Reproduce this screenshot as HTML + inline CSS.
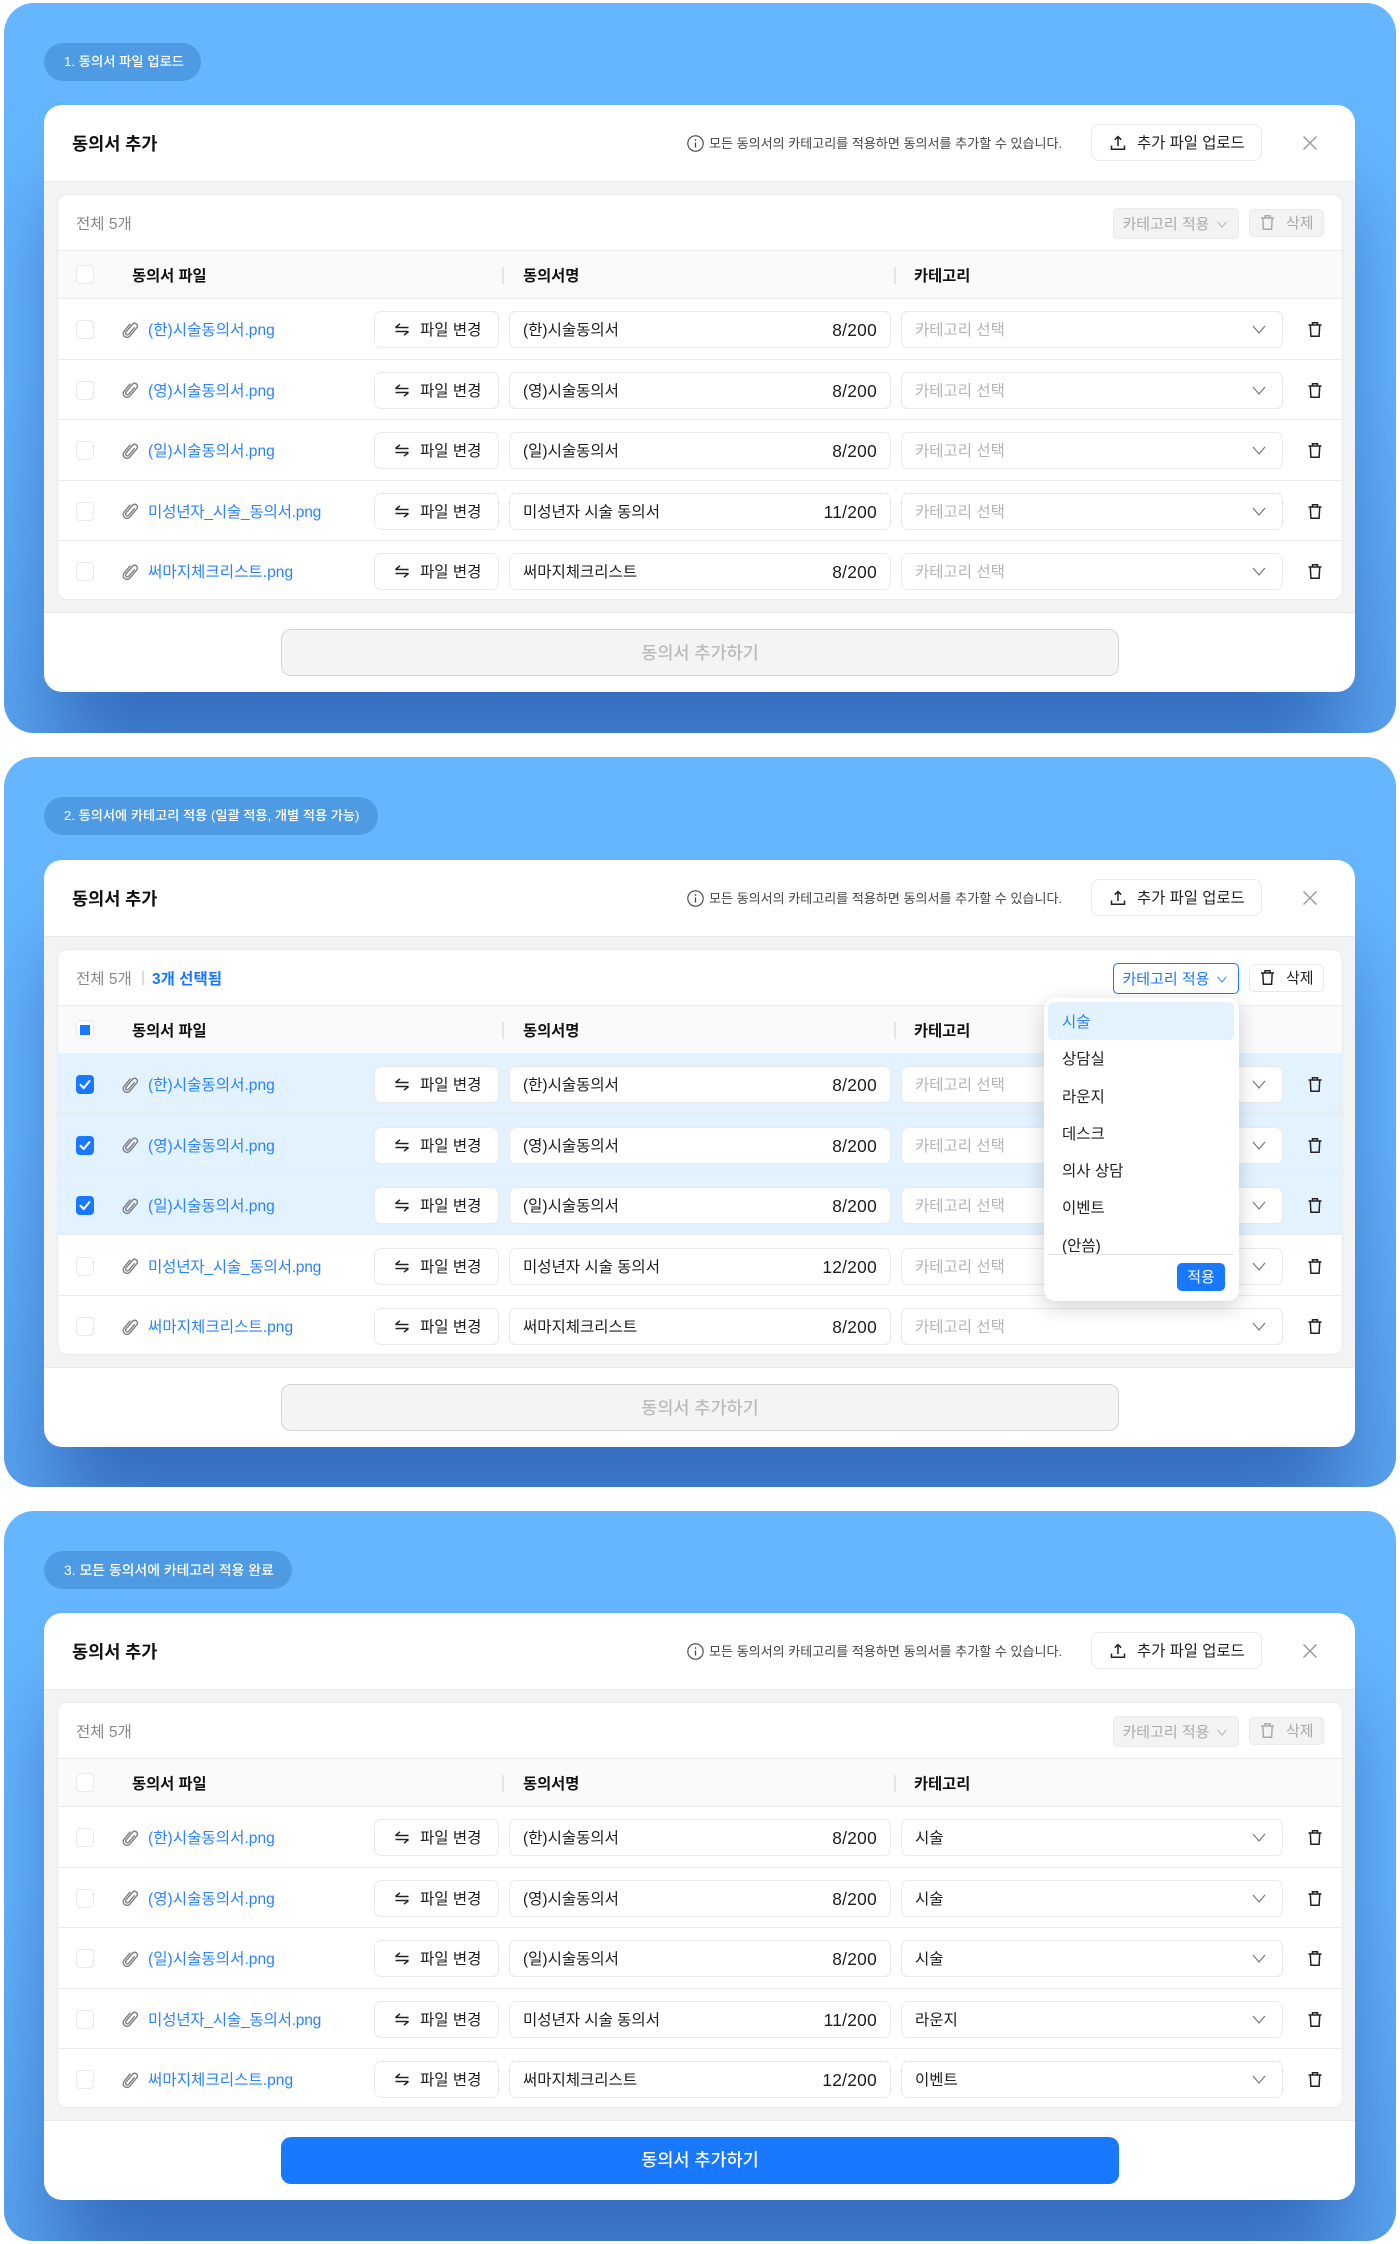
<!DOCTYPE html>
<html lang="ko"><head><meta charset="utf-8"><title>동의서 추가</title>
<style>
*{box-sizing:border-box;margin:0;padding:0}
html,body{width:1400px;height:2244px;background:#fff;overflow:hidden}
body{position:relative;font-family:"Liberation Sans","Noto Sans CJK KR",sans-serif;color:#1c1c1e;font-size:15.5px}
.p{position:absolute;left:4px;width:1392px;height:730px;border-radius:30px;background:linear-gradient(180deg,#66b6ff 0,#66b6ff 50%,#5aa5f0 100%);overflow:hidden}
.w{position:absolute;left:-4px;top:-3px;width:1400px;height:733px}
.w>*,.a{position:absolute}
.pill{left:44px;top:43px;height:38px;line-height:38px;border-radius:19px;background:#4f9be3;color:#fff;font-size:13.3px;font-weight:500;padding-left:20px;white-space:nowrap}
.m{left:44px;top:105px;width:1311px;height:587px;background:#fff;border-radius:18px;box-shadow:0 80px 90px -10px rgba(14,50,140,.5)}
.gray{left:44px;top:181px;width:1311px;height:432px;background:#f3f3f3;border-top:1.5px solid #e8e8e8;border-bottom:1.5px solid #e8e8e8}
.title{left:72px;top:128px;line-height:33px;font-size:17.5px;font-weight:700;color:#111}
.info{left:709px;top:128px;line-height:32px;font-size:13.05px;color:#444;white-space:nowrap}
.ii{left:687px;top:134.500px;width:17px;height:17px;color:#444}
.up{left:1091px;top:124px;width:171px;height:37px;border:1.5px solid #e9e9e9;border-radius:8px;background:#fff;line-height:38px;font-size:15.4px;padding-left:45px;white-space:nowrap}
.upi{left:1110px;top:134.500px;width:16px;height:16px;color:#222}
.x{left:1302px;top:135px;width:16px;height:16px;color:#9a9aa4}
.card{left:57px;top:194px;width:1286px;height:406px;background:#fff;border:1.5px solid #e9e9e9;border-radius:10px}
.th{left:58px;top:250px;width:1284px;height:48.5px;background:#fafafa;border-top:1.5px solid #ececec;border-bottom:1.5px solid #ececec}
.tot{left:76px;top:209px;line-height:31px;font-size:15.5px;color:#888}
.sep{width:2px;height:17px;top:267px;background:#e4e4e4}
.hd{top:260px;line-height:33px;font-size:15.3px;font-weight:700;color:#111}
.cat{left:1113px;top:208px;width:126px;height:31px;line-height:31px;border:1.5px solid #e9e9e9;background:#f3f3f3;border-radius:5px;color:#aaa;font-size:15px;padding-left:8.5px;white-space:nowrap}
.cat svg{position:absolute;left:102px;top:9px;width:12px;height:12px}
.del{left:1249px;top:209px;width:75px;height:28px;line-height:28px;border:1.5px solid #e9e9e9;background:#f3f3f3;border-radius:5px;color:#aaa;font-size:15px;padding-left:36px}
.del svg{position:absolute;left:9px;top:4px;width:17px;height:17px}
.cat.on{border-color:#1878ff;background:#fff;color:#1878ff}
.del.on{background:#fff;color:#222}
.cb{left:76px;width:18px;height:19px;border:1.5px solid #e9e9e9;border-radius:4px;background:#fff}
.r{position:absolute;left:0;width:1400px;height:60.5px}
.r:before{content:"";position:absolute;left:58px;width:1284px;top:0;height:60.5px;border-bottom:1.5px solid #ececec}
.r.n:before{border-bottom:0;height:59px}
.r.s:before{background:#e3f2ff;border-bottom:0;height:59px}
.r.s:after{content:"";position:absolute;left:58px;width:1284px;top:59px;height:1.5px;background:#e6ecf2}
.r>*{position:absolute}
.r .cb{top:22px}
.r .ck{left:76px;top:22px;width:18px;height:19px;border-radius:4px;background:#1878ff;color:#fff}
.r .clip{left:118px;top:19.700px;width:24px;height:24px;color:#7d7d82}
.l{left:148px;top:13px;line-height:40px;color:#2b82ff;white-space:nowrap;font-size:15.6px}
.l.u{letter-spacing:-.25px}
.b{left:374px;top:13px;width:125px;height:37px;line-height:37px;border:1.5px solid #e9e9e9;border-radius:7px;background:#fff;padding-left:45px;white-space:nowrap}
.sw{left:394px;top:23px;width:16px;height:16px;color:#222}
.in{left:509px;top:13px;width:382px;height:37px;line-height:37px;border:1.5px solid #e9e9e9;border-radius:7px;background:#fff;padding-left:13px;white-space:nowrap}
.in b{position:absolute;right:13px;top:0;font-weight:400;font-size:17.3px;letter-spacing:.3px}
.se{left:901px;top:13px;width:382px;height:37px;line-height:37px;border:1.5px solid #e9e9e9;border-radius:7px;background:#fff;padding-left:13px;white-space:nowrap}
.se.ph{color:#b4b4b8}
.se svg{position:absolute;left:349px;top:9px;width:16px;height:16px;color:#777}
.t{left:1307px;top:23px;width:16px;height:17px;color:#222}
.go{left:281px;top:629px;width:838px;height:47px;line-height:47px;text-align:center;border-radius:10px;font-size:17.5px;font-weight:500}
.go.d{background:#f4f4f4;border:1.5px solid #d4d4d4;color:#bbb}
.go.e{background:#1878ff;color:#fff}
svg{display:block;fill:none;stroke:currentColor}
.dd{left:1044px;top:243px;width:195px;height:303px;background:#fff;border-radius:11px;box-shadow:0 6px 22px rgba(0,0,0,.18);z-index:5}
.dd .hl{left:4px;top:4px;width:186px;height:38px;background:#e3f2ff;border-radius:5px}
.dd .list{left:0;top:0;width:195px;height:256px;overflow:hidden}
.dd .it{position:absolute;left:18px;line-height:33px;white-space:nowrap;font-size:15.5px;color:#222}
.dd .ln{left:4px;top:255.5px;width:186px;height:1.5px;background:#e5e5e5}
.dd .ap{left:133px;top:265px;width:48px;height:28px;line-height:29px;background:#1878ff;color:#fff;border-radius:5px;text-align:center;font-size:15px}
</style></head><body>
<svg width="0" height="0" style="position:absolute">
<symbol id="c" viewBox="0 0 24 24"><g transform="rotate(40 12 12)" stroke-width="1.4" stroke-linecap="round"><path d="M8.200 7.500V16.700a3.800 3.800 0 0 0 7.600 0V6a2.800 2.800 0 0 0-5.600 0V16a1.800 1.800 0 0 0 3.600 0V7.500"/></g></symbol>
<symbol id="s" viewBox="0 0 16 16"><path stroke-width="1.5" d="M1.500 6.500h13M1.500 6.500L6 2.800M14.500 10.500h-13M14.500 10.500L10 14.200"/></symbol>
<symbol id="d" viewBox="0 0 16 16"><path stroke-width="1.200" d="M2 5l6 7 6-7"/></symbol>
<symbol id="t" viewBox="0 0 16 17"><path stroke-width="1.500" d="M1.500 4h13M5.500 4V1.700h5V4M3.300 4l.6 11.300h8.200l.6-11.300"/></symbol>
<symbol id="x" viewBox="0 0 16 16"><path stroke-width="1.500" d="M1.500 1.500l13 13M14.500 1.500l-13 13"/></symbol>
<symbol id="u" viewBox="0 0 16 16"><path stroke-width="1.500" d="M1.500 10.500v3.700h13v-3.700M8 11V1.500M4.800 4.700L8 1.500l3.200 3.200"/></symbol>
<symbol id="i" viewBox="0 0 17 17"><circle cx="8.500" cy="8.500" r="7.700" stroke-width="1.100"/><path stroke-width="1.300" d="M8.500 7.500v5M8.500 4.300v1.400"/></symbol>
<symbol id="k" viewBox="0 0 18 19"><path stroke-width="2" stroke-linecap="round" stroke-linejoin="round" d="M4.500 9.800l3.200 3.200 5.800-7"/></symbol>
</svg>

<!-- PANEL 1 -->
<div class="p" style="top:3px"><div class="w">
<div class="pill" style="width:157px">1. 동의서 파일 업로드</div>
<div class="m"></div><div class="gray"></div>
<div class="title">동의서 추가</div>
<svg class="ii"><use href="#i"/></svg><div class="info">모든 동의서의 카테고리를 적용하면 동의서를 추가할 수 있습니다.</div>
<div class="up">추가 파일 업로드</div><svg class="upi"><use href="#u"/></svg><svg class="x"><use href="#x"/></svg>
<div class="card"></div>
<div class="tot">전체 5개</div>
<div class="cat">카테고리 적용<svg><use href="#d"/></svg></div>
<div class="del"><svg><use href="#t"/></svg>삭제</div>
<div class="th"></div><i class="cb" style="top:265px"></i>
<div class="hd" style="left:132px">동의서 파일</div><div class="sep" style="left:502px"></div><div class="hd" style="left:523px">동의서명</div><div class="sep" style="left:894px"></div><div class="hd" style="left:914px">카테고리</div>

<div class="r" style="top:298px"><i class="cb"></i><svg class="clip"><use href="#c"/></svg><span class="l">(한)시술동의서.png</span><div class="b">파일 변경</div><svg class="sw"><use href="#s"/></svg><div class="in">(한)시술동의서<b>8/200</b></div><div class="se ph">카테고리 선택<svg><use href="#d"/></svg></div><svg class="t"><use href="#t"/></svg></div>
<div class="r" style="top:358.5px"><i class="cb"></i><svg class="clip"><use href="#c"/></svg><span class="l">(영)시술동의서.png</span><div class="b">파일 변경</div><svg class="sw"><use href="#s"/></svg><div class="in">(영)시술동의서<b>8/200</b></div><div class="se ph">카테고리 선택<svg><use href="#d"/></svg></div><svg class="t"><use href="#t"/></svg></div>
<div class="r" style="top:419px"><i class="cb"></i><svg class="clip"><use href="#c"/></svg><span class="l">(일)시술동의서.png</span><div class="b">파일 변경</div><svg class="sw"><use href="#s"/></svg><div class="in">(일)시술동의서<b>8/200</b></div><div class="se ph">카테고리 선택<svg><use href="#d"/></svg></div><svg class="t"><use href="#t"/></svg></div>
<div class="r" style="top:479.5px"><i class="cb"></i><svg class="clip"><use href="#c"/></svg><span class="l u">미성년자_시술_동의서.png</span><div class="b">파일 변경</div><svg class="sw"><use href="#s"/></svg><div class="in">미성년자 시술 동의서<b>11/200</b></div><div class="se ph">카테고리 선택<svg><use href="#d"/></svg></div><svg class="t"><use href="#t"/></svg></div>
<div class="r n" style="top:540px"><i class="cb"></i><svg class="clip"><use href="#c"/></svg><span class="l">써마지체크리스트.png</span><div class="b">파일 변경</div><svg class="sw"><use href="#s"/></svg><div class="in">써마지체크리스트<b>8/200</b></div><div class="se ph">카테고리 선택<svg><use href="#d"/></svg></div><svg class="t"><use href="#t"/></svg></div>
<div class="go d">동의서 추가하기</div>
</div></div>

<!-- PANEL 2 -->
<div class="p" style="top:757px"><div class="w" style="top:-2px">
<div class="pill" style="width:334px;top:42px;font-size:13.2px">2. 동의서에 카테고리 적용 (일괄 적용, 개별 적용 가능)</div>
<div class="m"></div><div class="gray"></div>
<div class="title">동의서 추가</div>
<svg class="ii"><use href="#i"/></svg><div class="info">모든 동의서의 카테고리를 적용하면 동의서를 추가할 수 있습니다.</div>
<div class="up">추가 파일 업로드</div><svg class="upi"><use href="#u"/></svg><svg class="x"><use href="#x"/></svg>
<div class="card"></div>
<div class="tot">전체 5개</div><div style="left:142px;top:216px;width:1.5px;height:14px;background:#ddd"></div><div class="tot" style="left:152px;color:#1878ff;font-weight:700">3개 선택됨</div>
<div class="cat on">카테고리 적용<svg><use href="#d"/></svg></div>
<div class="del on"><svg><use href="#t"/></svg>삭제</div>
<div class="th"></div><i class="cb" style="top:265px"></i><div style="left:80px;top:270px;width:10px;height:10px;background:#1878ff"></div>
<div class="hd" style="left:132px">동의서 파일</div><div class="sep" style="left:502px"></div><div class="hd" style="left:523px">동의서명</div><div class="sep" style="left:894px"></div><div class="hd" style="left:914px">카테고리</div>

<div class="r s" style="top:298px"><svg class="ck"><use href="#k"/></svg><svg class="clip"><use href="#c"/></svg><span class="l">(한)시술동의서.png</span><div class="b">파일 변경</div><svg class="sw"><use href="#s"/></svg><div class="in">(한)시술동의서<b>8/200</b></div><div class="se ph">카테고리 선택<svg><use href="#d"/></svg></div><svg class="t"><use href="#t"/></svg></div>
<div class="r s" style="top:358.5px"><svg class="ck"><use href="#k"/></svg><svg class="clip"><use href="#c"/></svg><span class="l">(영)시술동의서.png</span><div class="b">파일 변경</div><svg class="sw"><use href="#s"/></svg><div class="in">(영)시술동의서<b>8/200</b></div><div class="se ph">카테고리 선택<svg><use href="#d"/></svg></div><svg class="t"><use href="#t"/></svg></div>
<div class="r s" style="top:419px"><svg class="ck"><use href="#k"/></svg><svg class="clip"><use href="#c"/></svg><span class="l">(일)시술동의서.png</span><div class="b">파일 변경</div><svg class="sw"><use href="#s"/></svg><div class="in">(일)시술동의서<b>8/200</b></div><div class="se ph">카테고리 선택<svg><use href="#d"/></svg></div><svg class="t"><use href="#t"/></svg></div>
<div class="r" style="top:479.5px"><i class="cb"></i><svg class="clip"><use href="#c"/></svg><span class="l u">미성년자_시술_동의서.png</span><div class="b">파일 변경</div><svg class="sw"><use href="#s"/></svg><div class="in">미성년자 시술 동의서<b>12/200</b></div><div class="se ph">카테고리 선택<svg><use href="#d"/></svg></div><svg class="t"><use href="#t"/></svg></div>
<div class="r n" style="top:540px"><i class="cb"></i><svg class="clip"><use href="#c"/></svg><span class="l">써마지체크리스트.png</span><div class="b">파일 변경</div><svg class="sw"><use href="#s"/></svg><div class="in">써마지체크리스트<b>8/200</b></div><div class="se ph">카테고리 선택<svg><use href="#d"/></svg></div><svg class="t"><use href="#t"/></svg></div>
<div class="go d">동의서 추가하기</div>

<div class="dd">
<div class="a hl"></div>
<div class="a list">
<div class="it" style="top:8px;color:#2b82ff">시술</div>
<div class="it" style="top:45px">상담실</div>
<div class="it" style="top:82.500px">라운지</div>
<div class="it" style="top:120px">데스크</div>
<div class="it" style="top:157px">의사 상담</div>
<div class="it" style="top:194px">이벤트</div>
<div class="it" style="top:232px">(안씀)</div>
</div>
<div class="a ln"></div>
<div class="a ap">적용</div>
</div>
</div></div>

<!-- PANEL 3 -->
<div class="p" style="top:1511px"><div class="w">
<div class="pill" style="width:248px;font-size:13.9px">3. 모든 동의서에 카테고리 적용 완료</div>
<div class="m"></div><div class="gray"></div>
<div class="title">동의서 추가</div>
<svg class="ii"><use href="#i"/></svg><div class="info">모든 동의서의 카테고리를 적용하면 동의서를 추가할 수 있습니다.</div>
<div class="up">추가 파일 업로드</div><svg class="upi"><use href="#u"/></svg><svg class="x"><use href="#x"/></svg>
<div class="card"></div>
<div class="tot">전체 5개</div>
<div class="cat">카테고리 적용<svg><use href="#d"/></svg></div>
<div class="del"><svg><use href="#t"/></svg>삭제</div>
<div class="th"></div><i class="cb" style="top:265px"></i>
<div class="hd" style="left:132px">동의서 파일</div><div class="sep" style="left:502px"></div><div class="hd" style="left:523px">동의서명</div><div class="sep" style="left:894px"></div><div class="hd" style="left:914px">카테고리</div>

<div class="r" style="top:298px"><i class="cb"></i><svg class="clip"><use href="#c"/></svg><span class="l">(한)시술동의서.png</span><div class="b">파일 변경</div><svg class="sw"><use href="#s"/></svg><div class="in">(한)시술동의서<b>8/200</b></div><div class="se">시술<svg><use href="#d"/></svg></div><svg class="t"><use href="#t"/></svg></div>
<div class="r" style="top:358.5px"><i class="cb"></i><svg class="clip"><use href="#c"/></svg><span class="l">(영)시술동의서.png</span><div class="b">파일 변경</div><svg class="sw"><use href="#s"/></svg><div class="in">(영)시술동의서<b>8/200</b></div><div class="se">시술<svg><use href="#d"/></svg></div><svg class="t"><use href="#t"/></svg></div>
<div class="r" style="top:419px"><i class="cb"></i><svg class="clip"><use href="#c"/></svg><span class="l">(일)시술동의서.png</span><div class="b">파일 변경</div><svg class="sw"><use href="#s"/></svg><div class="in">(일)시술동의서<b>8/200</b></div><div class="se">시술<svg><use href="#d"/></svg></div><svg class="t"><use href="#t"/></svg></div>
<div class="r" style="top:479.5px"><i class="cb"></i><svg class="clip"><use href="#c"/></svg><span class="l u">미성년자_시술_동의서.png</span><div class="b">파일 변경</div><svg class="sw"><use href="#s"/></svg><div class="in">미성년자 시술 동의서<b>11/200</b></div><div class="se">라운지<svg><use href="#d"/></svg></div><svg class="t"><use href="#t"/></svg></div>
<div class="r n" style="top:540px"><i class="cb"></i><svg class="clip"><use href="#c"/></svg><span class="l">써마지체크리스트.png</span><div class="b">파일 변경</div><svg class="sw"><use href="#s"/></svg><div class="in">써마지체크리스트<b>12/200</b></div><div class="se">이벤트<svg><use href="#d"/></svg></div><svg class="t"><use href="#t"/></svg></div>
<div class="go e">동의서 추가하기</div>
</div></div>
</body></html>
